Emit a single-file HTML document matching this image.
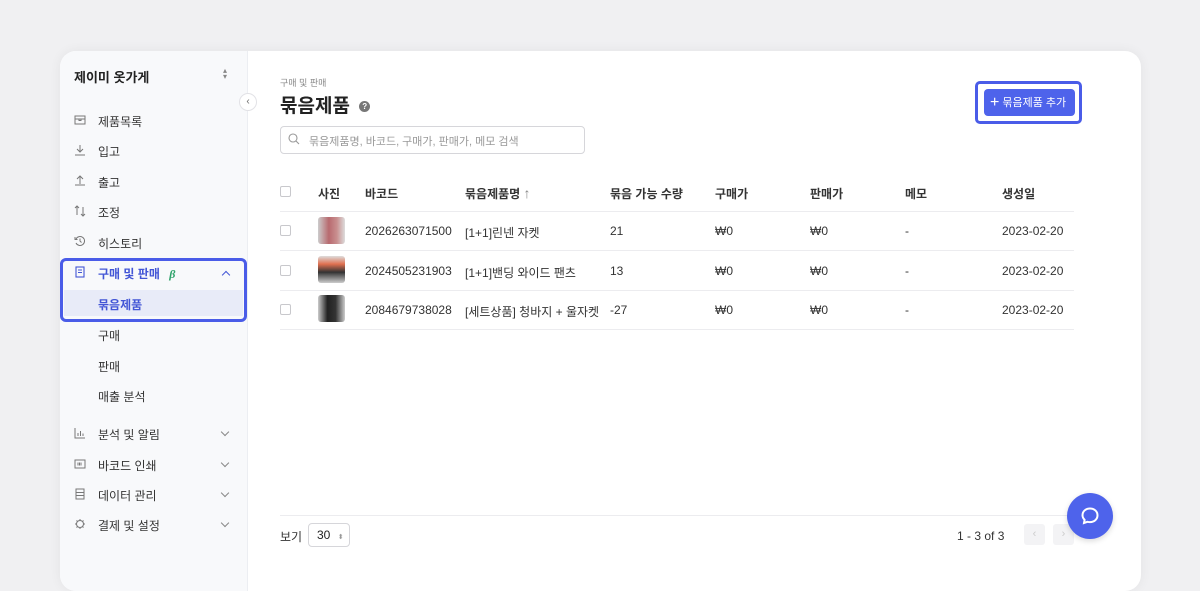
<!DOCTYPE html>
<html><head><meta charset="utf-8"><style>
*{box-sizing:border-box;margin:0;padding:0}
body{width:1200px;height:570px;overflow:hidden;background:#f0f0f2;font-family:"Liberation Sans","Noto Sans CJK KR",sans-serif;color:#222;position:relative}
.card{position:absolute;left:60px;top:51px;width:1081px;height:540px;background:#fff;border-radius:16px;overflow:hidden;box-shadow:0 0 12px rgba(0,0,0,.06)}
.side{position:absolute;left:0;top:0;width:188px;height:100%;background:#f8f9fb;border-right:1px solid #eceef2}
.abs{position:absolute;white-space:nowrap}
.nav{font-size:12px;color:#333}
.ic{position:absolute;left:14px;width:12px;height:12px}
.ic svg{display:block}
.chev{position:absolute;left:162px;width:6px;height:6px;border-right:1.2px solid #888;border-bottom:1.2px solid #888;transform:rotate(45deg)}
.th{font-size:12px;font-weight:bold;color:#333}
.td{font-size:12px;color:#333}
.line{position:absolute;left:220px;width:794px;height:1px;background:#ececef}
.cb{position:absolute;left:220px;width:11px;height:11px;border:1px solid #c8c8cc;border-radius:2px;background:#fff}
.th2{position:absolute;left:258px;width:27px;height:27px;border-radius:3px}
</style></head><body>
<div class="card">
 <div class="side">
  <div class="abs" style="left:14px;top:16px;font-size:13px;font-weight:bold">제이미 옷가게</div>
  <div class="abs" style="left:163px;top:17px;font-size:8px;color:#888;line-height:6px">▴<br>▾</div>
  <div class="abs nav" style="left:38px;top:62px">제품목록</div>
  <div class="ic" style="top:63px"><svg width="12" height="12" viewBox="0 0 12 12" fill="none" stroke="#777" stroke-width="1"><rect x="1" y="2" width="10" height="8"/><path d="M1 5h10M5 5v1.5h2V5"/></svg></div>
  <div class="abs nav" style="left:38px;top:92px">입고</div>
  <div class="ic" style="top:93px"><svg width="12" height="12" viewBox="0 0 12 12" fill="none" stroke="#777" stroke-width="1"><path d="M6 1v7M3 5l3 3 3-3M1 11h10"/></svg></div>
  <div class="abs nav" style="left:38px;top:123px">출고</div>
  <div class="ic" style="top:123px"><svg width="12" height="12" viewBox="0 0 12 12" fill="none" stroke="#777" stroke-width="1"><path d="M6 10V2M3 5l3-3 3 3M1 11h10"/></svg></div>
  <div class="abs nav" style="left:38px;top:153px">조정</div>
  <div class="ic" style="top:154px"><svg width="12" height="12" viewBox="0 0 12 12" fill="none" stroke="#777" stroke-width="1"><path d="M3 10V1M1 3l2-2 2 2M9 2v9M7 9l2 2 2-2"/></svg></div>
  <div class="abs nav" style="left:38px;top:184px">히스토리</div>
  <div class="ic" style="top:184px"><svg width="12" height="12" viewBox="0 0 12 12" fill="none" stroke="#777" stroke-width="1"><path d="M2 4A4.5 4.5 0 1 1 2 8M1 2v2.5h2.5M6 3.5V6l1.5 1.5"/></svg></div>
  <div class="abs" style="left:4px;top:239px;width:179px;height:26px;background:#e8ebf8"></div>
  <div class="abs" style="left:0;top:207px;width:187px;height:64px;border:3px solid #4a5ce8;border-radius:6px"></div>
  <div class="abs nav" style="left:38px;top:214px;color:#4356d6;font-weight:bold">구매 및 판매 <i style="color:#2fa36b;font-family:'Liberation Serif';margin-left:6px">β</i></div>
  <div class="ic" style="top:215px"><svg width="12" height="12" viewBox="0 0 12 12" fill="none" stroke="#4356d6" stroke-width="1.1"><rect x="2" y="1" width="8" height="10"/><path d="M4 4h4M4 6.5h4"/></svg></div>
  <div class="abs" style="left:163px;top:221px;width:6px;height:6px;border-left:1.5px solid #4356d6;border-top:1.5px solid #4356d6;transform:rotate(45deg)"></div>
  <div class="abs nav" style="left:38px;top:245px;color:#4356d6;font-weight:bold">묶음제품</div>
  <div class="abs nav" style="left:38px;top:276px">구매</div>
  <div class="abs nav" style="left:38px;top:307px">판매</div>
  <div class="abs nav" style="left:38px;top:337px">매출 분석</div>
  <div class="abs nav" style="left:38px;top:375px">분석 및 알림</div>
  <div class="ic" style="top:376px"><svg width="12" height="12" viewBox="0 0 12 12" fill="none" stroke="#777" stroke-width="1"><path d="M1 1v10h10M4 9V6M6.5 9V4M9 9V6.5"/></svg></div><div class="chev" style="top:378px"></div>
  <div class="abs nav" style="left:38px;top:406px">바코드 인쇄</div>
  <div class="ic" style="top:407px"><svg width="12" height="12" viewBox="0 0 12 12" fill="none" stroke="#777" stroke-width="1"><rect x="1" y="2" width="10" height="8"/><path d="M4 4.5v3M5.5 4.5v3M7 4.5v3"/></svg></div><div class="chev" style="top:409px"></div>
  <div class="abs nav" style="left:38px;top:436px">데이터 관리</div>
  <div class="ic" style="top:437px"><svg width="12" height="12" viewBox="0 0 12 12" fill="none" stroke="#777" stroke-width="1"><rect x="2" y="1" width="8" height="10"/><path d="M2 4.5h8M2 7.5h8"/></svg></div><div class="chev" style="top:439px"></div>
  <div class="abs nav" style="left:38px;top:466px">결제 및 설정</div>
  <div class="ic" style="top:467px"><svg width="12" height="12" viewBox="0 0 12 12" fill="none" stroke="#777" stroke-width="1"><circle cx="6" cy="6" r="3.5"/><path d="M6 1v1.5M6 9.5V11M1 6h1.5M9.5 6H11M2.5 2.5l1 1M8.5 8.5l1 1M2.5 9.5l1-1M8.5 3.5l1-1"/></svg></div><div class="chev" style="top:469px"></div>
 </div>
 <div class="abs" style="left:179px;top:42px;width:18px;height:18px;border-radius:50%;background:#fff;border:1px solid #e2e2e6;font-size:10px;color:#666;text-align:center;line-height:16px">‹</div>
 <div class="abs" style="left:220px;top:25px;font-size:9px;color:#888">구매 및 판매</div>
 <div class="abs" style="left:220px;top:40px;font-size:19px;font-weight:bold;color:#222">묶음제품 <span style="display:inline-block;width:11px;height:11px;border-radius:50%;background:#777;color:#fff;font-size:8px;text-align:center;line-height:11px;vertical-align:3px;margin-left:4px">?</span></div>
 <div class="abs" style="left:220px;top:75px;width:305px;height:28px;border:1px solid #d6d6da;border-radius:4px;font-size:11px;color:#999;padding:6px 0 0 28px">묶음제품명, 바코드, 구매가, 판매가, 메모 검색</div>
 <svg class="abs" style="left:228px;top:82px" width="12" height="12" viewBox="0 0 12 12" fill="none" stroke="#999" stroke-width="1.1"><circle cx="5" cy="5" r="4"/><path d="M8 8l3 3"/></svg>
 <div class="abs" style="left:915px;top:30px;width:107px;height:43px;border:3px solid #4a5ce8;border-radius:5px"></div>
 <div class="abs" style="left:924px;top:38px;width:91px;height:27px;background:#4e63eb;border-radius:4px;color:#fff;font-size:11px;padding-top:5px;padding-left:6px"><span style="font-size:16px;vertical-align:-1px">+</span> 묶음제품 추가</div>
 <div class="cb" style="top:135px"></div>
 <div class="abs th" style="left:258px;top:134px">사진</div>
 <div class="abs th" style="left:305px;top:134px">바코드</div>
 <div class="abs th" style="left:405px;top:134px">묶음제품명 <span style="font-weight:normal;color:#888;font-size:14px">↑</span></div>
 <div class="abs th" style="left:550px;top:134px">묶음 가능 수량</div>
 <div class="abs th" style="left:655px;top:134px">구매가</div>
 <div class="abs th" style="left:750px;top:134px">판매가</div>
 <div class="abs th" style="left:845px;top:134px">메모</div>
 <div class="abs th" style="left:942px;top:134px">생성일</div>
 <div class="line" style="top:160px"></div>
 <div class="cb" style="top:174px"></div><div class="th2" style="top:166px;background:linear-gradient(90deg,#ccc,#b86a6f 40%,#c98f8f 70%,#ddd)"></div>
 <div class="abs td" style="left:305px;top:173px">2026263071500</div><div class="abs td" style="left:405px;top:173px">[1+1]린넨 자켓</div><div class="abs td" style="left:550px;top:173px">21</div><div class="abs td" style="left:655px;top:173px">₩0</div><div class="abs td" style="left:750px;top:173px">₩0</div><div class="abs td" style="left:845px;top:173px">-</div><div class="abs td" style="left:942px;top:173px">2023-02-20</div>
 <div class="line" style="top:199px"></div>
 <div class="cb" style="top:214px"></div><div class="th2" style="top:205px;background:linear-gradient(180deg,#ddd,#e07050 30%,#333 60%,#ccc)"></div>
 <div class="abs td" style="left:305px;top:213px">2024505231903</div><div class="abs td" style="left:405px;top:213px">[1+1]밴딩 와이드 팬츠</div><div class="abs td" style="left:550px;top:213px">13</div><div class="abs td" style="left:655px;top:213px">₩0</div><div class="abs td" style="left:750px;top:213px">₩0</div><div class="abs td" style="left:845px;top:213px">-</div><div class="abs td" style="left:942px;top:213px">2023-02-20</div>
 <div class="line" style="top:239px"></div>
 <div class="cb" style="top:253px"></div><div class="th2" style="top:244px;background:linear-gradient(90deg,#ccc,#222 35%,#333 65%,#ccc)"></div>
 <div class="abs td" style="left:305px;top:252px">2084679738028</div><div class="abs td" style="left:405px;top:252px">[세트상품] 청바지 + 울자켓</div><div class="abs td" style="left:550px;top:252px">-27</div><div class="abs td" style="left:655px;top:252px">₩0</div><div class="abs td" style="left:750px;top:252px">₩0</div><div class="abs td" style="left:845px;top:252px">-</div><div class="abs td" style="left:942px;top:252px">2023-02-20</div>
 <div class="line" style="top:278px"></div>
 <div class="line" style="top:464px"></div>
 <div class="abs td" style="left:220px;top:477px">보기</div>
 <div class="abs" style="left:248px;top:472px;width:42px;height:24px;border:1px solid #d6d6da;border-radius:4px;font-size:12px;padding:4px 0 0 8px">30 <span style="font-size:7px;color:#999;margin-left:4px">⬍</span></div>
 <div class="abs td" style="left:897px;top:478px">1 - 3 of 3</div>
 <div class="abs" style="left:964px;top:473px;width:21px;height:21px;background:#f3f3f5;border-radius:3px;color:#ccc;font-size:11px;text-align:center;line-height:21px">‹</div>
 <div class="abs" style="left:993px;top:473px;width:21px;height:21px;background:#f3f3f5;border-radius:3px;color:#ccc;font-size:11px;text-align:center;line-height:21px">›</div>
</div>
<div class="abs" style="left:1067px;top:493px;width:46px;height:46px;border-radius:50%;background:#4e63eb;box-shadow:0 2px 6px rgba(0,0,0,.15)">
 <svg style="position:absolute;left:13px;top:13px" width="20" height="20" viewBox="0 0 20 20" fill="none" stroke="#fff" stroke-width="2"><path d="M10 2.5c4.4 0 7.5 2.9 7.5 6.8s-3.1 6.8-7.5 6.8c-.9 0-1.7-.1-2.5-.3L4 17l.6-3.2C3.3 12.6 2.5 11 2.5 9.3 2.5 5.4 5.6 2.5 10 2.5z"/></svg>
</div>
</body></html>
